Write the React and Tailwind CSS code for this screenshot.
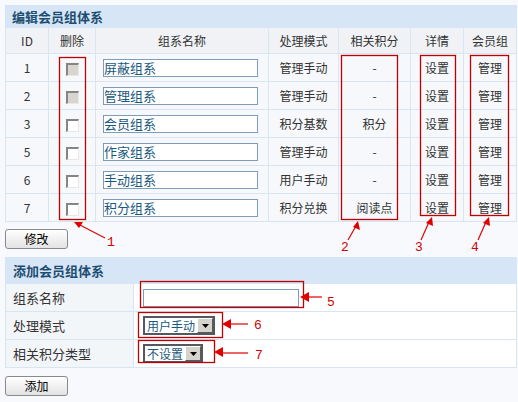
import React from "react";

const rows = [
  { id: 1, locked: true, name: "屏蔽组系", mode: "管理手动", points: "-" },
  { id: 2, locked: true, name: "管理组系", mode: "管理手动", points: "-" },
  { id: 3, locked: false, name: "会员组系", mode: "积分基数", points: "积分" },
  { id: 5, locked: false, name: "作家组系", mode: "管理手动", points: "-" },
  { id: 6, locked: false, name: "手动组系", mode: "用户手动", points: "-" },
  { id: 7, locked: false, name: "积分组系", mode: "积分兑换", points: "阅读点" },
];

const font = { fontFamily: '"Noto Sans CJK SC", "Noto Sans", sans-serif' };

function Checkbox({ disabled }) {
  return (
    <span
      className={`inline-block h-[13px] w-[13px] border-t-2 border-l-2 border-b border-r border-t-[#858585] border-l-[#858585] border-b-[#e8e8e8] border-r-[#e8e8e8] align-middle ${
        disabled ? "bg-[#d8d5ce]" : "bg-white"
      }`}
    />
  );
}

function Btn({ children }) {
  return (
    <button className="flex h-[20px] w-[63px] items-center justify-center rounded-[3px] border border-[#8a8a8a] bg-gradient-to-b from-white to-[#e3e3e3] text-[12px] text-black">
      {children}
    </button>
  );
}

function Select({ label, width }) {
  return (
    <div className={`flex h-[19px] ${width} items-center gap-[2px] border-2 border-[#55585c] bg-white pl-[2px]`}>
      <span className="flex-1 whitespace-nowrap text-[12px] leading-[15px] text-[#1b5a80]">{label}</span>
      <span className="flex h-[15px] w-[16px] flex-none items-center justify-center border border-t-white border-l-white border-b-[#5a5a5a] border-r-[#5a5a5a] bg-[#d6d3cc]">
        <svg width="7" height="4" viewBox="0 0 7 4">
          <path d="M0 0h7L3.5 4z" fill="#000" />
        </svg>
      </span>
    </div>
  );
}

export default function App() {
  const td = "border border-[#d8e5f2] text-center text-[12px] text-[#333]";
  return (
    <div className="relative h-[402px] w-[518px] bg-[#f8f9fc] pl-[5px] pt-[5px]" style={font}>
      {/* group list */}
      <table className="w-[511px] table-fixed border-collapse">
        <colgroup>
          <col className="w-[43px]" />
          <col className="w-[47px]" />
          <col className="w-[173px]" />
          <col className="w-[70px]" />
          <col className="w-[72px]" />
          <col className="w-[53px]" />
          <col className="w-[53px]" />
        </colgroup>
        <thead>
          <tr className="h-[22px] bg-[#d6e6f6]">
            <th colSpan={7} className="border border-[#d6e6f6] pl-[6px] text-left text-[13px] font-bold text-[#1d4d70]">
              编辑会员组体系
            </th>
          </tr>
          <tr className="h-[26px] bg-[#f0f2f5]">
            {["ID", "删除", "组系名称", "处理模式", "相关积分", "详情", "会员组"].map((h) => (
              <th key={h} className={`${td} font-normal`}>
                {h}
              </th>
            ))}
          </tr>
        </thead>
        <tbody>
          {rows.map((r) => (
            <tr key={r.id} className="h-[28px] bg-[#f6f8fb]">
              <td className={td}>{r.id}</td>
              <td className={td}>
                <Checkbox disabled={r.locked} />
              </td>
              <td className={`${td} pl-[7px] text-left`}>
                <div className="flex h-[18px] w-[155px] items-center border border-[#7f9db9] bg-white text-[13px] text-[#1b5a80]">
                  {r.name}
                </div>
              </td>
              <td className={td}>{r.mode}</td>
              <td className={td}>{r.points}</td>
              <td className={td}>设置</td>
              <td className={td}>管理</td>
            </tr>
          ))}
        </tbody>
      </table>

      <div className="mt-[7px]">
        <Btn>修改</Btn>
      </div>

      {/* new group form */}
      <table className="mt-[8px] w-[512px] table-fixed border-collapse">
        <colgroup>
          <col className="w-[128px]" />
          <col />
        </colgroup>
        <thead>
          <tr className="h-[26px] bg-[#d6e6f6]">
            <th colSpan={2} className="border border-[#d6e6f6] pl-[7px] text-left text-[13px] font-bold text-[#1d4d70]">
              添加会员组体系
            </th>
          </tr>
        </thead>
        <tbody>
          <tr className="h-[28px]">
            <td className="border border-[#d8e5f2] bg-[#f3f6f9] pl-[7px] text-[13px] text-[#333]">组系名称</td>
            <td className="border border-[#d8e5f2] bg-white pl-[9px]">
              <div className="h-[18px] w-[156px] border border-[#7f9db9] bg-white" />
            </td>
          </tr>
          <tr className="h-[28px]">
            <td className="border border-[#d8e5f2] bg-[#f3f6f9] pl-[7px] text-[13px] text-[#333]">处理模式</td>
            <td className="border border-[#d8e5f2] bg-white pl-[9px]">
              <Select label="用户手动" width="w-[72px]" />
            </td>
          </tr>
          <tr className="h-[28px]">
            <td className="border border-[#d8e5f2] bg-[#f3f6f9] pl-[7px] text-[13px] text-[#333]">相关积分类型</td>
            <td className="border border-[#d8e5f2] bg-white pl-[9px]">
              <Select label="不设置" width="w-[60px]" />
            </td>
          </tr>
        </tbody>
      </table>

      <div className="mt-[8px]">
        <Btn>添加</Btn>
      </div>

      {/* red callouts */}
      <svg className="pointer-events-none absolute left-0 top-0" width="518" height="402" viewBox="0 0 518 402">
        <g fill="none" stroke="#c00000" strokeWidth="1.3">
          <rect x="59.5" y="57.5" width="26" height="162" />
          <rect x="341.5" y="55.5" width="56" height="164" />
          <rect x="420.5" y="55.5" width="35" height="160" />
          <rect x="470.5" y="55.5" width="38" height="160" />
          <rect x="140.5" y="281.5" width="163" height="26" />
          <rect x="138.5" y="312.5" width="84" height="25" />
          <rect x="138.5" y="340.5" width="76" height="22" />
        </g>
        <g stroke="#e00000" strokeWidth="1.2" fill="none">
          <line x1="105" y1="238" x2="80" y2="225" />
          <line x1="348" y1="240" x2="356" y2="226" />
          <line x1="421" y1="240" x2="429" y2="222" />
          <line x1="478" y1="240" x2="486" y2="222" />
          <line x1="322" y1="297" x2="308" y2="297" />
          <line x1="248" y1="324" x2="230" y2="324" />
          <line x1="248" y1="353" x2="222" y2="353" />
        </g>
        <g fill="#e00000">
          <path d="M74 222l9 0l-4 6z" />
          <path d="M358 221l2 9l-7 -3z" />
          <path d="M432 217l1 9l-7 -3z" />
          <path d="M489 217l1 9l-7 -3z" />
          <path d="M300 297l9 -5l0 10z" />
          <path d="M222 324l9 -5l0 10z" />
          <path d="M214 352l9 -5l0 10z" />
        </g>
        <g fill="#d00000" fontSize="13" fontFamily='"Liberation Mono", monospace'>
          <text x="107" y="246">1</text>
          <text x="341" y="251">2</text>
          <text x="415" y="251">3</text>
          <text x="471" y="251">4</text>
          <text x="327" y="306">5</text>
          <text x="254" y="329">6</text>
          <text x="255" y="359">7</text>
        </g>
      </svg>
    </div>
  );
}
